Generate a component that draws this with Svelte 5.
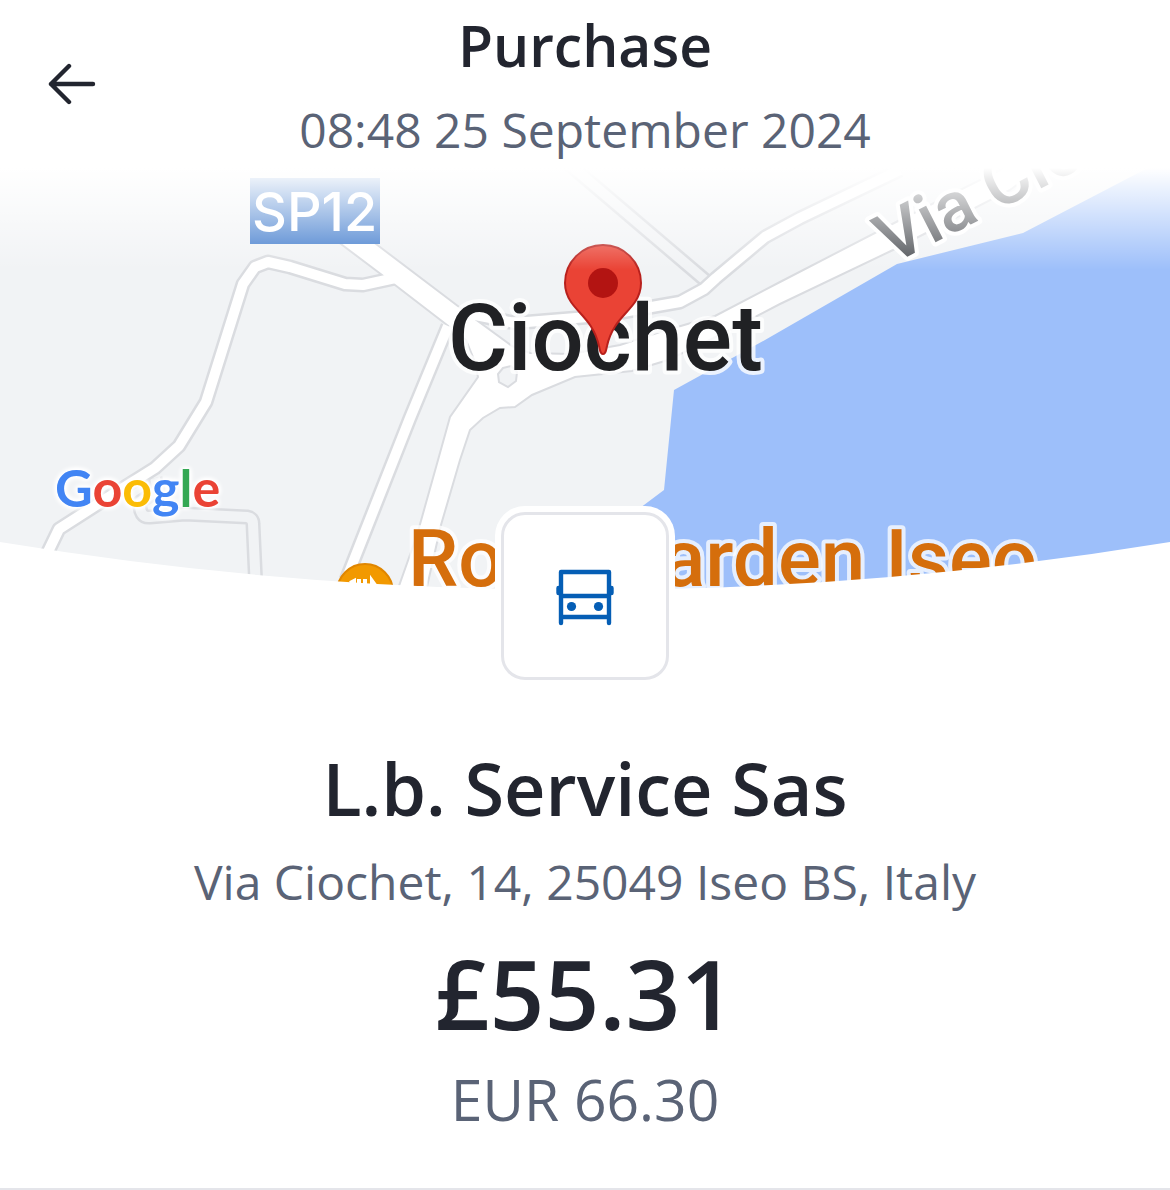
<script>
    let title = "Purchase";
    let date = "08:48 25 September 2024";
    let merchant = "L.b. Service Sas";
    let address = "Via Ciochet, 14, 25049 Iseo BS, Italy";
    let amount = "£55.31";
    let localAmount = "EUR 66.30";

    // casing is drawn first, then the road surface on top
    let lanes = [
        "M570 165 L705 280",
        "M155 478 L158 490 L140 502 Q139 518 150 517 L185 514 L247 517 Q253 518 253 524 L256 590"
    ];
    let streets = [
        "M44 560 L59 529 L112 495 L155 468 L179 446 L206 402 L243 284 L255 267 L268 262 L290 267 L345 284 L363 285 L400 277",
        "M448 326 L410 418 L346 580",
        "M470 314 L515 323 L600 316 L680 302 L704 289 L716 278 L765 237 L800 218 L900 170"
    ];

    function goBack(){
        history.back();
    }
</script>

<div class="page">
    <header>
        <button class="back" aria-label="Back" on:click={goBack}>
            <svg viewBox="0 0 48 48" aria-hidden="true">
                <path d="M45 24 H3 M21 6 L3 24 L21 42" />
            </svg>
        </button>
        <h1>{title}</h1>
        <p class="date">{date}</p>
    </header>

    <svg class="map" viewBox="0 168 1170 432" role="img" aria-label="Map of Ciochet">
        <defs>
            <linearGradient id="fade" x1="0" y1="0" x2="0" y2="1">
                <stop offset="0" stop-color="#fff" />
                <stop offset="1" stop-color="#fff" stop-opacity="0" />
            </linearGradient>
        </defs>
        <rect class="land" y="168" width="1170" height="432" />

        {#each lanes as d}
            <path class="casing" {d} />
            <path class="lane" {d} />
        {/each}
        {#each streets as d}
            <path class="casing" {d} />
        {/each}
        <path class="main" d="M325 232 L382 275 L447 325 L466 340 L475 362 L478 377 L450 417 L438 460 L417 535 L394 600
            L424 600 L441 525 L460 460 L470 430 L483 418 L500 408 L515 407 L532 395 L575 377 L632 371 L668 360
            L720 335 L780 304 L893 250 L1010 190 L1050 160 L1020 160 L900 220 L780 282 L715 316 L660 332
            L620 345 L570 354 L530 353 L512 346 L475 319 L380 247 L360 232 Z" />
        {#each streets as d}
            <path class="street" {d} />
        {/each}
        <path class="island" d="M503 368 L511 366 L517 372 L516 381 L508 387 L499 382 L498 374 Z" />

        <path class="lake" d="M1170 158 L1140 172 L1023 233 L897 264 L765 340 L674 390 L664 490 L620 523 V600 H1170 Z" />

        <circle class="spot" cx="365" cy="592" r="28" />
        <path class="cutlery" d="M350 583 L354 581 V600 M359 579 V600 M365 579 V600 M372 600 V581 L377 588 V600" />

        <rect class="shield" x="250" y="178" width="130" height="66" />
        <text class="road-number" x="252" y="231">SP12</text>
        <text class="road-name" transform="translate(891 265) rotate(-27)">Via Ciochet</text>
        <text class="town" x="448" y="370">Ciochet</text>
        <text class="place" x="408" y="586">Rose Garden Iseo</text>

        <path class="pin" d="M603 354 C600 354 600 350 599 346 C594 323 580 315 571 302 C567 296 565 290 565 283
            A38 38 0 0 1 641 283 C641 290 639 296 635 302 C626 315 612 323 607 346 C606 350 606 354 603 354 Z" />
        <circle class="pin-dot" cx="603" cy="283" r="15" />

        <text class="google" x="55" y="507"><tspan class="blue">G</tspan><tspan class="red">o</tspan><tspan class="yellow">o</tspan><tspan class="blue">g</tspan><tspan class="green">l</tspan><tspan class="red">e</tspan></text>

        <rect fill="url(#fade)" y="168" width="1170" height="102" />
        <path class="curve" d="M0 542 Q585 638 1170 542 V600 H0 Z" />
    </svg>

    <main>
        <div class="category">
            <svg viewBox="0 0 60 60" role="img" aria-label="Transport">
                <path d="M6 57 V6 H54 V57 M6 30 H54 M6 51 H54" />
                <path d="M3.5 22 V27 M56.5 22 V27" />
                <circle cx="16.5" cy="40.5" r="4.6" />
                <circle cx="43.5" cy="40.5" r="4.6" />
            </svg>
        </div>
        <h2>{merchant}</h2>
        <p class="address">{address}</p>
        <p class="amount">{amount}</p>
        <p class="local">{localAmount}</p>
    </main>
</div>

<style>
    :global(body) {
        margin: 0;
        background: #fff;
    }
    .page {
        font-family: "Open Sans", sans-serif;
        color: #22252f;
        text-align: center;
        overflow: hidden;
    }
    h1, h2, p {
        margin: 0;
    }

    header {
        position: relative;
        display: flex;
        flex-direction: column;
        gap: 19px;
        padding: 9px 120px 8px;
    }
    .back {
        position: absolute;
        left: 48px;
        top: 60px;
        width: 48px;
        height: 48px;
        padding: 0;
        border: 0;
        background: none;
        cursor: pointer;
    }
    .back svg {
        display: block;
        fill: none;
        stroke: #22252f;
        stroke-width: 4.4;
        stroke-linecap: round;
        stroke-linejoin: round;
    }
    h1 {
        font-size: 57px;
        line-height: 72px;
        font-weight: 600;
    }
    .date, .address {
        font-size: 48px;
        line-height: 60px;
        color: #5a6376;
    }

    /* map */
    .map {
        display: block;
        width: 100%;
    }
    .land {
        fill: #f1f3f5;
    }
    .lake {
        fill: #9dbffa;
    }
    .casing, .lane, .street {
        fill: none;
        stroke-linejoin: round;
    }
    .casing {
        stroke: #dadce0;
        stroke-width: 15;
    }
    .lane {
        stroke: #f1f3f5;
        stroke-width: 10;
    }
    .street {
        stroke: #fff;
        stroke-width: 10;
    }
    .main {
        fill: #fff;
        stroke: #dadce0;
        stroke-width: 2;
    }
    .island {
        fill: #f1f3f5;
        stroke: #dadce0;
        stroke-width: 2;
    }
    .spot {
        fill: #f29900;
        stroke: #e08600;
        stroke-width: 2;
    }
    .cutlery {
        fill: none;
        stroke: #fff;
        stroke-width: 4;
    }
    .shield {
        fill: #3d79cc;
    }
    .road-number {
        font: 500 54px "Inter", sans-serif;
        fill: #fff;
    }
    .road-name, .town, .place {
        font-family: "Roboto", sans-serif;
        font-weight: 500;
        paint-order: stroke;
        stroke: #fff;
        stroke-width: 8;
        stroke-linejoin: round;
    }
    .road-name {
        font-size: 70px;
        fill: #4c4f54;
    }
    .town {
        font-size: 92px;
        fill: #202124;
        stroke-opacity: 0.8;
    }
    .place {
        font-size: 80px;
        fill: #d56e0c;
        stroke-opacity: 0.75;
    }
    .pin {
        fill: #ea4335;
        stroke: #b8201c;
        stroke-width: 2;
    }
    .pin-dot {
        fill: #b31412;
    }
    .google {
        font: 700 52px "Lato", sans-serif;
        filter: drop-shadow(0 0 2px #fff) drop-shadow(0 0 2px #fff) drop-shadow(0 0 1px #fff);
    }
    .blue {
        fill: #4285f4;
    }
    .red {
        fill: #ea4335;
    }
    .yellow {
        fill: #fbbc05;
    }
    .green {
        fill: #34a853;
    }
    .curve {
        fill: #fff;
    }

    /* details */
    main {
        display: flex;
        flex-direction: column;
        align-items: center;
        padding-bottom: 53px;
        border-bottom: 2px solid #e4e5ea;
    }
    .category {
        position: relative;
        display: flex;
        align-items: center;
        justify-content: center;
        box-sizing: border-box;
        width: 168px;
        height: 168px;
        margin-top: -88px;
        border: 3px solid #e4e5ea;
        border-radius: 24px;
        background: #fff;
        box-shadow: 0 0 0 6px #fff;
    }
    .category svg {
        width: 60px;
        height: 60px;
        fill: none;
        stroke: #055eb5;
        stroke-width: 4.4;
        stroke-linecap: round;
        stroke-linejoin: round;
    }
    .category circle {
        fill: #055eb5;
        stroke: none;
    }
    h2 {
        margin-top: 60px;
        font-size: 72px;
        line-height: 96px;
        font-weight: 600;
    }
    .address {
        margin-top: 16px;
    }
    .amount {
        margin-top: 21px;
        font-size: 96px;
        line-height: 120px;
        font-weight: 600;
    }
    .local {
        margin-top: 10px;
        font-size: 57px;
        line-height: 72px;
        color: #5a6376;
    }
</style>
